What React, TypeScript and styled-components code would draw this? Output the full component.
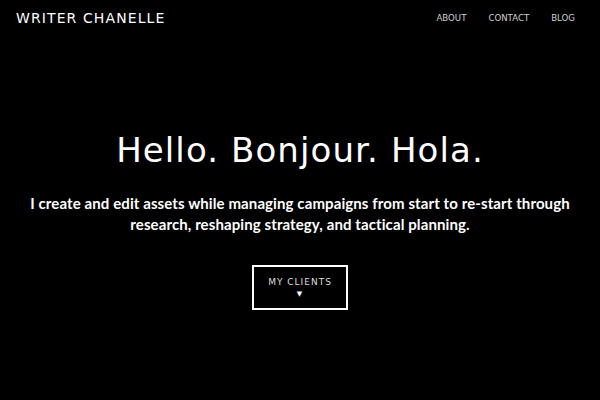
import React from "react";
import styled, { createGlobalStyle } from "styled-components";

const GlobalStyle = createGlobalStyle`
  html, body {
    margin: 0;
    padding: 0;
    background: #000;
  }
  body {
    font-family: "DejaVu Sans", sans-serif;
    color: #fff;
  }
`;

const Page = styled.div`
  width: 600px;
  height: 400px;
  background: #000;
  display: flex;
  flex-direction: column;
  overflow: hidden;
`;

const Header = styled.header`
  display: flex;
  justify-content: space-between;
  align-items: center;
  padding: 9px 25px 0 16px;
  height: 17px;
`;

const Logo = styled.a`
  font-family: "DejaVu Sans", sans-serif;
  font-size: 14px;
  letter-spacing: 1.1px;
  color: #fff;
  text-decoration: none;
`;

const Nav = styled.nav`
  display: flex;
  gap: 22px;
  padding-top: 1px;
`;

const NavLink = styled.a`
  font-family: "DejaVu Sans", sans-serif;
  font-size: 8.6px;
  color: #cfcfcf;
  text-decoration: none;
`;

const Hero = styled.section`
  flex: 1;
  display: flex;
  flex-direction: column;
  align-items: center;
  padding-top: 104px;
`;

const Title = styled.h1`
  margin: 0;
  font-family: "DejaVu Sans", sans-serif;
  font-weight: normal;
  font-size: 34px;
  letter-spacing: 1.1px;
  line-height: 40px;
  color: #fff;
`;

const Lead = styled.p`
  margin: 23px 0 0;
  font-family: "Lato", sans-serif;
  font-weight: bold;
  font-size: 15px;
  letter-spacing: 0.1px;
  line-height: 21px;
  text-align: center;
  color: #fff;
  width: 570px;
`;

const ClientsButton = styled.button`
  margin-top: 30px;
  width: 96px;
  height: 45px;
  background: transparent;
  border: 2px solid #fff;
  color: #ddd;
  display: flex;
  flex-direction: column;
  align-items: center;
  justify-content: center;
  gap: 3px;
  font-family: "DejaVu Sans", sans-serif;
  font-size: 9px;
  letter-spacing: 1px;
  cursor: pointer;
  padding: 0;
`;

const Arrow = styled.span`
  font-size: 7px;
  line-height: 8px;
  color: #fff;
`;

export default function App() {
  return (
    <Page>
      <GlobalStyle />
      <Header>
        <Logo href="#">WRITER CHANELLE</Logo>
        <Nav>
          <NavLink href="#">ABOUT</NavLink>
          <NavLink href="#">CONTACT</NavLink>
          <NavLink href="#">BLOG</NavLink>
        </Nav>
      </Header>
      <Hero>
        <Title>Hello. Bonjour. Hola.</Title>
        <Lead>
          I create and edit assets while managing campaigns from start to re-start through
          research, reshaping strategy, and tactical planning.
        </Lead>
        <ClientsButton>
          MY CLIENTS
          <Arrow>▼</Arrow>
        </ClientsButton>
      </Hero>
    </Page>
  );
}
